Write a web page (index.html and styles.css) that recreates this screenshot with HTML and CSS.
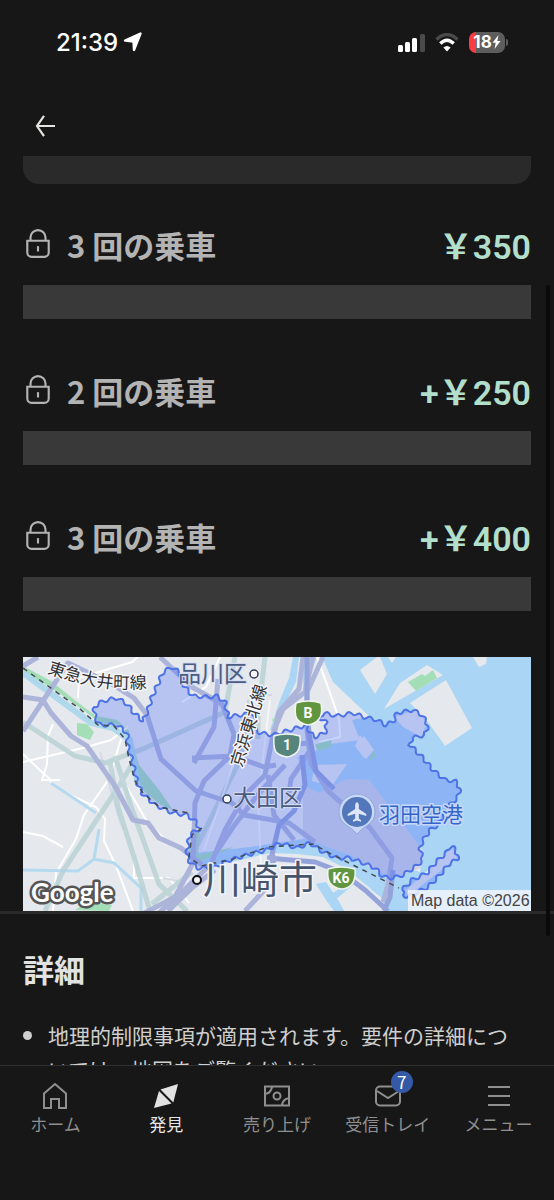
FILE: index.html
```
<!DOCTYPE html>
<html lang="ja">
<head>
    <meta charset="UTF-8">
    <meta name="viewport" content="width=device-width, initial-scale=1.0">
    <title>発見</title>
    <link rel="stylesheet" href="styles.css">
</head>
<body>

    <div class="status-bar">
        <div class="clock">
            <span>21:39</span>
            <svg width="20" height="20" viewBox="0 0 20 20"><path d="M17.500 1.500 2 8.600 10.500 9.500 11 18z" fill="#fff" stroke="#fff" stroke-width="2.400" stroke-linejoin="round"/></svg>
        </div>
        <div class="status-icons">
            <svg width="27" height="19" viewBox="0 0 27 19">
                <rect x="0" y="12" width="5" height="7" rx="1.500" fill="#fff"/>
                <rect x="7" y="9" width="5" height="10" rx="1.500" fill="#fff"/>
                <rect x="14" y="5" width="5" height="14" rx="1.500" fill="#fff"/>
                <rect x="22" y="1" width="5" height="18" rx="1.500" fill="#4a4a4a"/>
            </svg>
            <svg width="24" height="19" viewBox="0 0 24 19">
                <path d="M1.500 6.500Q12-3.500 22.500 6.500" fill="none" stroke="#4a4a4a" stroke-width="3.400"/>
                <path d="M5.300 10.500Q12 4 18.700 10.500" fill="none" stroke="#fff" stroke-width="3.400"/>
                <path d="M12 18.500 8.400 14.600Q12 11.200 15.600 14.600z" fill="#fff"/>
            </svg>
            <div class="battery">
                <span>18</span>
                <svg width="9" height="14" viewBox="0 0 9 14"><path d="M6.500 0 .5 7.700h3.200L2.500 14l6-8H5.300z" fill="#fff"/></svg>
            </div>
        </div>
    </div>

    <header class="top-bar">
        <button class="back" aria-label="戻る">
            <svg width="20" height="22" viewBox="0 0 20 22"><path d="M9 .8 2 11l7 10.200M2 11h18" fill="none" stroke="#e4e4e0" stroke-width="2.200"/></svg>
        </button>
    </header>

    <main class="content">
        <div class="card-end"></div>

        <section class="tier">
            <div class="tier-row">
                <svg class="lock" viewBox="0 0 24 28"><path d="M5 11V8a7 7 0 0 1 14 0v3M2 11h20v11a4 4 0 0 1-4 4H6a4 4 0 0 1-4-4z"/><path d="M12 16v5"/></svg>
                <h2>3 回の乗車</h2>
                <span class="price">￥350</span>
            </div>
            <div class="track"></div>
        </section>
        <section class="tier">
            <div class="tier-row">
                <svg class="lock" viewBox="0 0 24 28"><path d="M5 11V8a7 7 0 0 1 14 0v3M2 11h20v11a4 4 0 0 1-4 4H6a4 4 0 0 1-4-4z"/><path d="M12 16v5"/></svg>
                <h2>2 回の乗車</h2>
                <span class="price">+￥250</span>
            </div>
            <div class="track"></div>
        </section>
        <section class="tier">
            <div class="tier-row">
                <svg class="lock" viewBox="0 0 24 28"><path d="M5 11V8a7 7 0 0 1 14 0v3M2 11h20v11a4 4 0 0 1-4 4H6a4 4 0 0 1-4-4z"/><path d="M12 16v5"/></svg>
                <h2>3 回の乗車</h2>
                <span class="price">+￥400</span>
            </div>
            <div class="track"></div>
        </section>

        <svg class="map" viewBox="23 657 508 254" role="img" aria-label="大田区の地図">
            <rect x="23" y="657" width="508" height="254" fill="#e5e8ed"/>

            <!-- sea and canals -->
            <g fill="#aad5f4">
                <path d="M322 657H531V911H386L370 888 345 868 323 857 298 854 270 853 240 860 210 866 192 862 196 853 250 847 310 838 345 848 420 872 424 852 367 780 340 782 322 800 303 790 306 778 297 757 310 756 322 745 360 740 352 720 370 717 333 682z"/>
                <path d="M293 657h6l-3 25-12 24-8 24h-6l10-30 9-22zM303 657h14l-8 20v18h-6z"/>
                <path d="M316 884l10-2 12 18 6 11h-10l-8-11zM330 895l18-12 5 2-18 15z"/>
            </g>
            <g fill="#e5e8ed">
                <path d="M360 670l17-13h3l7 17-12 20zM388 657h8l-4 6zM473 657h14l-1 7-7 3z"/>
                <path d="M384 709l16-26 27-18 16 10zM410 703l36-23 26 48-27 18-17-24-13-14z"/>
                <path d="M394 717l24-8 9 15-6 13-18-10zM314 765l33-1-15 22-20-5zM358 746l6-10 10 14-8 9zM360 735l13 15-9 8-9-12z"/>
                <path d="M405 891l47-43 5 10-49 38zM353 875l30 24-2 12h-20z"/>
            </g>
            <path d="M303 785l16 8 28-14 22 1 54 71-2 17-28 9-21-8-20-13-49-18z" fill="#d0d4e6"/>

            <!-- parks -->
            <g fill="#a4deb6">
                <path d="M408 682l14-8 3 2 8-6 4 8-21 13zM77 723l10 1 7 8-4 8-13-5z"/>
                <path d="M23 671l36 22 42 30 20 2 7 22 6 26 10 18 17 14 12 5-14-20-20-25-10-34-12-11-21-4-20-15-25-20-28-15z"/>
                <path d="M192 834l8-5-2 26 36-8-38 16-8-4zM272 720l5-5 1 15zM75 910l12-8 25 3-3 6zM370 757l4-7 1 6-6 6zM315 745l17-8-1 10-13 4z"/>
            </g>

            <!-- small streets -->
            <g fill="none" stroke="#fff" stroke-width="2">
                <path d="M23 754l20 19 8 7-10 0M53 724l-5 12-1 28-5 16M23 762l60-14 28-8 17-13M78 698l1-20 53-16 6-5M60 780l-15 0M23 832l20 4 20 11M53 911l3-38 20-34 8-24 25-36 12-40M50 781l16 12 30 14 9 12-1 22 12 25 17 45M120 775l26 45 17 18M134 860v18h35l20 25M317 657l13 36 9 26 1 18-21 5M220 657l-14 30-24 15"/>
                <path d="M100 752l20 70 4 8M250 695l22 0M163 878l15 3" stroke="#d4dae4"/>
            </g>
            <path d="M23 870l55 1 16-12 20 4 27 25v23M94 859l5-30M51 783l45 30" fill="none" stroke="#b5daf0" stroke-width="3"/>

            <!-- railways -->
            <g fill="none" stroke="#b5cfd2" stroke-width="5">
                <path d="M23 722l52 34 30 7 40-15 80-36 10-55M110 762l8 45 16 50 16 54M115 756l16 50 28 78 28 27M45 911l18-40 56-85 12-20M192 872l-40 32M265 657l-7 60 0 22M250 700l-10 60-50 100" stroke-opacity=".8"/>
                <path d="M23 673l68 50 22 5 17 12 8 45" stroke="#aed8ec" stroke-width="6"/>
            </g>
            <path d="M248 720l-20 60-24 70M270 700l-12 100 3 65" fill="none" stroke="#fff" stroke-width="2" opacity=".6"/>

            <!-- main roads -->
            <g fill="none" stroke="#acb4da" stroke-width="5" stroke-linejoin="round">
                <path d="M38 657l-15 9M23 697l20 3 8 13 20 23 16 10 28 40 18 34 15 3 11 15 22 10 21 17M23 731l45-68 42 20 24 15 13 17 14 44 35 32 36 12 12 12 45 8 26 19"/>
                <path d="M303 657l-4 32-20 23-5 23 7 10 30-2M313 657l-8 35-22 17-9 21-9 45-20 20-20 35-14 34-28 27-34 31"/>
                <path d="M160 657l32 30 30 17 12 30-4 22-26 25-9 22-2 60-18 34-38 20-11 14M218 679l-4 48-20 36M192 758l42-2 30 11 12-2"/>
                <path d="M323 657l-16 35v37l4 35 17 27 42 37 22 30-4 27-5 17M309 752l-18 27-2 14M268 775l6 40 20 25M168 911l25-24 22-17M215 854l18-27 27-35 25-27M245 911l24-26"/>
            </g>
            <g fill="none" stroke="#94a3da" stroke-width="5" stroke-linejoin="round">
                <path d="M302 755l3 30-11 26-15 14-8 34M270 858l-3 10M267 858l48 4 26 10 24 18 23 21M393 870l-3 27-6 14M307 657v60l3 22 6 32 18 18"/>
            </g>
            <circle cx="272" cy="859" r="5" fill="#9faadb"/>

            <!-- scalloped outlines are filled in by map.js -->
            <path class="zone" data-points="94,707 103,701 117,698 127,704 134,713 143,721 148,710 152,697 158,684 163,672 172,667 180,673 184,686 193,696 207,697 217,696 225,702 228,717 240,715 252,713 254,727 260,733 273,735 290,730 307,725 310,733 315,737 325,733 327,723 320,718 323,713 337,716 353,713 364,717 377,720 385,725 393,722 397,713 413,710 422,715 428,725 425,735 412,738 410,745 423,758 433,770 445,780 455,781 460,788 458,797 448,807 438,825 430,830 422,842 420,850 423,860 415,867 403,875 393,878 383,877 375,868 363,863 350,858 337,858 323,852 310,843 297,848 280,843 267,850 247,855 230,860 213,868 197,868 188,860 187,850 190,834 200,829 195,821 187,815 173,813 155,805 142,793 137,782 135,773 132,760 128,747 127,733 117,725 100,725 95,717"/>
            <path class="zone" data-points="403,895 402,890 412,880 427,873 435,863 447,852 449,847 453,847 458,855 457,860 450,863 438,877 428,887 420,891 408,897"/>

            <path d="M23 668l25 18 32 23 18 16 16 1 11 13 4 20 6 22 8 12 16 14 30 6M202 828l-10 7-3 22 12 9 32-7 35-12 15-1 30-2 18 10 30 15 38 19" fill="none" stroke="#444c55" stroke-width="1.500" stroke-dasharray="5 5"/>

            <!-- road shields -->
            <g class="shield" stroke-width="1.500">
                <path d="M296 703q12-4 25 0 2 11-2 16-4 5-11 6-7-1-11-6-3-5-1-16z" fill="#61953f"/>
                <path d="M274 736q12-4 26 0 1 11-3 16-4 4-10 5-7-1-11-5-3-5-2-16z" fill="#55857d"/>
                <path d="M328 869q13-4 27 0 1 10-3 15-4 5-11 5-7-1-11-6-3-4-2-14z" fill="#61953f"/>
                <text x="308" y="718">B</text>
                <text x="287" y="750">1</text>
                <text x="341" y="883">K6</text>
            </g>

            <!-- airport pin -->
            <path d="M357 834q-4-5-11-9-7-5-7-13a18 18 0 0 1 36 0q0 8-7 13-7 4-11 9z" fill="#c9d6f5" stroke="#92a7d8"/>
            <circle cx="357" cy="812" r="15" fill="#5277ba"/>
            <path d="M357 802q-1.800 1-1.800 3v4l-7.500 5v2l7.500-2.200v4.600l-2.200 1.800v1.600l4-1.200 4 1.200v-1.600l-2.200-1.800v-4.600l7.500 2.200v-2l-7.500-5v-4q0-2-1.800-3z" fill="#dfe6fa"/>

            <g class="labels">
                <path id="oimachi" d="M47 673Q70 681 95 686T156 687" fill="none" stroke="none"/>
                <text class="line-name"><textPath href="#oimachi">東急大井町線</textPath></text>
                <text class="line-name" transform="translate(242 768) rotate(-73)">京浜東北線</text>
                <text class="ward" x="178" y="682">品川区</text>
                <text class="ward" x="233" y="806">大田区</text>
                <text class="city" x="203" y="893">川崎市</text>
                <text class="airport" x="379" y="822">羽田空港</text>
            </g>
            <g fill="#f4f6fb" stroke="#333d50" stroke-width="1.500">
                <circle cx="254" cy="674" r="4"/>
                <circle cx="227" cy="799" r="4"/>
                <circle cx="197" cy="880" r="4" stroke="#111" stroke-width="2"/>
            </g>

            <text class="google" x="31" y="902">Google</text>
            <rect x="408" y="890" width="123" height="21" fill="#f1f5fa" opacity=".85"/>
            <text class="credit" x="411" y="906">Map data ©2026</text>
        </svg>

        <section class="details">
            <h2>詳細</h2>
            <ul>
                <li>地理的制限事項が適用されます。要件の詳細については、地図をご覧ください。</li>
            </ul>
        </section>
        <div class="scrollbar"></div>
    </main>

    <nav class="tabs">
        <a href="#">
            <svg width="28" height="28" viewBox="0 0 28 28"><path d="M3 26V11.500L14 2l11 9.500V26h-7v-9h-8v9z"/></svg>
            ホーム
        </a>
        <a href="#" class="active">
            <svg width="28" height="28" viewBox="0 0 28 28"><path d="M26 2 8.500 7.500l12.800 13z" fill="#e2e2e2" stroke="none"/><path d="M7 9 2 26l17.500-4.500z" fill="#e2e2e2" stroke="none"/></svg>
            発見
        </a>
        <a href="#">
            <svg width="28" height="28" viewBox="0 0 28 28"><path d="M2 4.500h24v19H2zM2 12q6-1 7-7M26 16q-6 1-7 7"/><circle cx="14" cy="14" r="3.500"/></svg>
            売り上げ
        </a>
        <a href="#">
            <span class="inbox">
                <svg width="28" height="28" viewBox="0 0 28 28"><rect x="2" y="4.500" width="24" height="19" rx="4"/><path d="M3 9l11 7 11-7"/></svg>
                <span class="badge">7</span>
            </span>
            受信トレイ
        </a>
        <a href="#">
            <svg width="28" height="28" viewBox="0 0 28 28"><path d="M3 5h22M3 14h22M3 23h22"/></svg>
            メニュー
        </a>
    </nav>

    <script src="map.js"></script>
</body>
</html>
```
FILE: styles.css
```
* {
    box-sizing: border-box;
}
body {
    margin: 0;
    height: 100vh;
    display: flex;
    flex-direction: column;
    background-color: #171717;
    color: #e2e2e2;
    font-family: "Noto Sans CJK JP", sans-serif;
}
h2, ul {
    margin: 0;
    padding: 0;
}
svg {
    flex: none;
}
.status-bar {
    display: flex;
    justify-content: space-between;
    align-items: center;
    height: 84px;
    padding: 0 46px 0 56px;
    font-family: Inter, sans-serif;
    color: white;
}
.clock {
    display: flex;
    align-items: center;
    gap: 5px;
    font-size: 24px;
    font-weight: 500;
}
.status-icons {
    display: flex;
    align-items: center;
    gap: 10px;
}
.battery {
    position: relative;
    display: flex;
    align-items: center;
    justify-content: center;
    width: 36px;
    height: 21px;
    margin-right: 3px;
    border-radius: 7px;
    background: linear-gradient(to right, #fb3b42 7px, #5d5d5d 7px);
    font-size: 17px;
    font-weight: 700;
}
.battery::after {
    content: "";
    position: absolute;
    right: -3px;
    top: 7px;
    width: 2px;
    height: 7px;
    border-radius: 0 2px 2px 0;
    background-color: #5d5d5d;
}
.top-bar {
    height: 72px;
    padding: 20px 24px;
}
.back {
    display: flex;
    align-items: center;
    padding: 0 11px;
    height: 44px;
    border: none;
    background: none;
    cursor: pointer;
}
.content {
    position: relative;
    flex: 1;
    min-height: 0;
    overflow: hidden;
    padding: 0 23px;
}
.card-end {
    height: 28px;
    margin-bottom: 42px;
    border-radius: 0 0 16px 16px;
    background-color: #2a2a2a;
}
.tier {
    margin-bottom: 53px;
}
.tier-row {
    display: flex;
    align-items: center;
    height: 36px;
    margin-bottom: 23px;
    color: #b3b3b3;
}
.tier-row h2 {
    flex: 1;
    font-size: 31px;
    font-weight: 700;
}
.lock {
    width: 26px;
    height: 30px;
    margin: 0 16px 0 2px;
    fill: none;
    stroke: #b3b3b3;
    stroke-width: 2;
}
.price {
    font-family: Roboto, "Noto Sans CJK JP", sans-serif;
    font-size: 34px;
    font-weight: 600;
    color: #b2dfcb;
}
.track {
    height: 34px;
    background-color: #393939;
}
.map {
    display: block;
    width: 100%;
    margin-top: -7px;
}
.zone {
    fill: rgba(77, 110, 250, .3);
    stroke: #4d73e6;
    stroke-width: 2;
}
.shield path {
    stroke: #f2f7ee;
}
.shield text {
    font-family: Roboto, sans-serif;
    font-size: 14px;
    font-weight: 700;
    text-anchor: middle;
    fill: white;
}
.labels text {
    stroke: #f4f6fb;
    stroke-width: 3;
    stroke-linejoin: round;
    paint-order: stroke;
}
.labels .line-name {
    font-size: 17px;
    fill: #333;
}
.labels .ward {
    font-size: 23px;
    fill: #4a5c80;
    stroke: #d5ddf5;
    stroke-width: 2;
}
.labels .city {
    font-size: 38px;
    fill: #46556e;
}
.labels .airport {
    font-size: 21px;
    fill: #3565c8;
    stroke: #c6d8fa;
}
.google {
    font-family: Lato, sans-serif;
    font-size: 26px;
    font-weight: 700;
    fill: white;
    stroke: #555;
    stroke-width: 5;
    stroke-linejoin: round;
    paint-order: stroke;
}
.credit {
    font-family: "Liberation Sans", Arial, sans-serif;
    font-size: 16px;
    fill: #444;
}
.details {
    margin: 0 -23px;
    padding: 32px 23px 0;
    border-top: 3px solid #292929;
}
.details h2 {
    font-size: 31px;
    font-weight: 700;
    line-height: 46px;
}
.details ul {
    margin-top: 26px;
    list-style: none;
}
.details li {
    display: flex;
    gap: 16px;
    padding-right: 16px;
    font-size: 21px;
    line-height: 34px;
    color: #cfcfcf;
}
.details li::before {
    content: "";
    flex: none;
    width: 9px;
    height: 9px;
    margin-top: 13px;
    border-radius: 50%;
    background-color: #cfcfcf;
}
.scrollbar {
    position: absolute;
    top: 129px;
    right: 4px;
    width: 4px;
    height: 651px;
    border-radius: 2px;
    background-color: #0a0a0a;
}
.tabs {
    display: grid;
    grid-template-columns: repeat(5, 1fr);
    height: 135px;
    padding-top: 16px;
    border-top: 1px solid #303030;
}
.tabs a {
    display: flex;
    flex-direction: column;
    align-items: center;
    font-size: 17px;
    line-height: 28px;
    color: #8f8f8f;
    text-decoration: none;
    white-space: nowrap;
}
.tabs a.active {
    color: #e8e8e8;
}
.tabs svg {
    display: block;
    fill: none;
    stroke: #8f8f8f;
    stroke-width: 2;
}
.inbox {
    position: relative;
}
.badge {
    position: absolute;
    top: -11px;
    right: -11px;
    width: 22px;
    height: 22px;
    border-radius: 50%;
    background-color: #3459a6;
    color: white;
    font-size: 17px;
    line-height: 22px;
    text-align: center;
}
```
FILE: map.js
```
// turn each rough outline into a scalloped one
document.querySelectorAll(".zone").forEach(zone => {
    const pts = zone.dataset.points;
    zone.setAttribute("d", "M" + pts + "z");
    const total = zone.getTotalLength();
    const waves = Math.round(total / 11);
    const out = [];

    for (let s = 0; s < total; s += 1.5) {
        const a = zone.getPointAtLength(Math.max(0, s - 3));
        const b = zone.getPointAtLength(Math.min(total, s + 3));
        const p = zone.getPointAtLength(s);
        const len = Math.hypot(b.x - a.x, b.y - a.y) || 1;
        const off = 1.8 * Math.sin(s / total * waves * 2 * Math.PI);
        const x = p.x - (b.y - a.y) / len * off;
        const y = p.y + (b.x - a.x) / len * off;
        out.push(x.toFixed(1) + "," + y.toFixed(1));
    }
    zone.setAttribute("d", "M" + out.join(" ") + "z");
});
```
